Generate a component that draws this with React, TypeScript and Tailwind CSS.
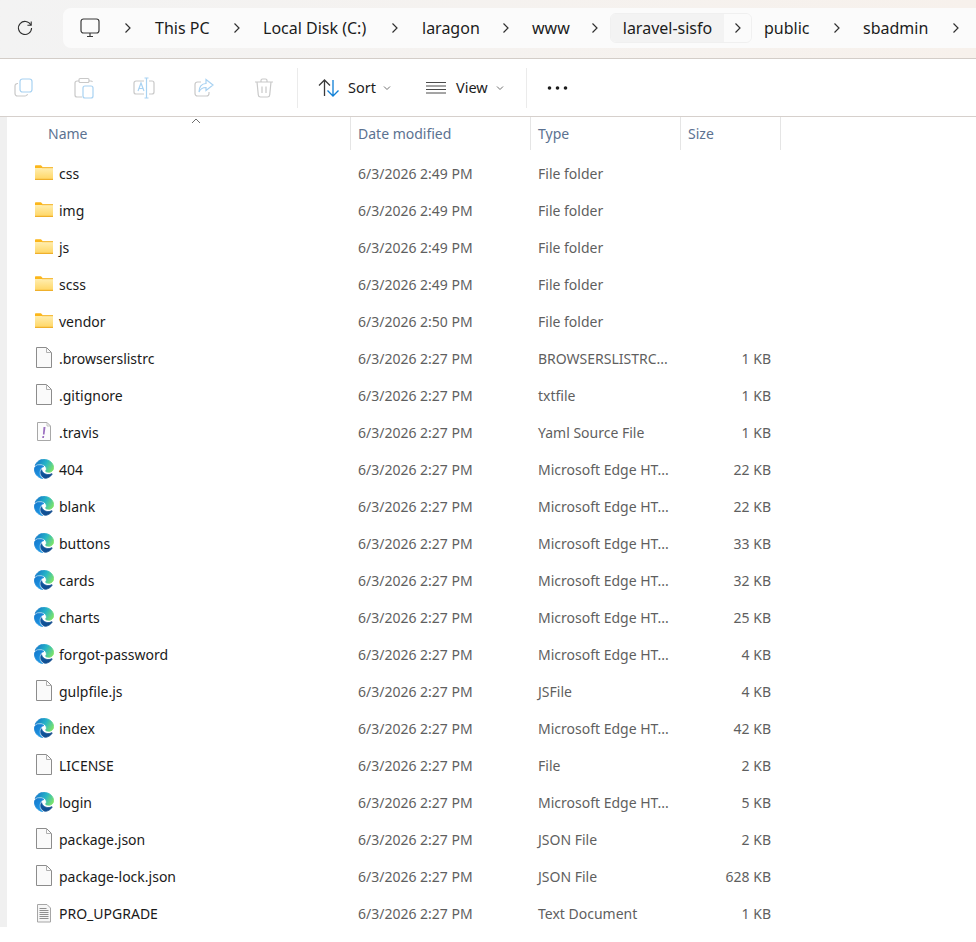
import type { ReactNode } from 'react'

type Kind = 'folder' | 'file' | 'yaml' | 'edge' | 'text'

interface Entry {
  name: string
  date: string
  type: string
  size?: string
  kind: Kind
}

const EDGE = 'Microsoft Edge HT...'

const ENTRIES: Entry[] = [
  { name: 'css', date: '6/3/2026 2:49 PM', type: 'File folder', kind: 'folder' },
  { name: 'img', date: '6/3/2026 2:49 PM', type: 'File folder', kind: 'folder' },
  { name: 'js', date: '6/3/2026 2:49 PM', type: 'File folder', kind: 'folder' },
  { name: 'scss', date: '6/3/2026 2:49 PM', type: 'File folder', kind: 'folder' },
  { name: 'vendor', date: '6/3/2026 2:50 PM', type: 'File folder', kind: 'folder' },
  { name: '.browserslistrc', date: '6/3/2026 2:27 PM', type: 'BROWSERSLISTRC...', size: '1 KB', kind: 'file' },
  { name: '.gitignore', date: '6/3/2026 2:27 PM', type: 'txtfile', size: '1 KB', kind: 'file' },
  { name: '.travis', date: '6/3/2026 2:27 PM', type: 'Yaml Source File', size: '1 KB', kind: 'yaml' },
  { name: '404', date: '6/3/2026 2:27 PM', type: EDGE, size: '22 KB', kind: 'edge' },
  { name: 'blank', date: '6/3/2026 2:27 PM', type: EDGE, size: '22 KB', kind: 'edge' },
  { name: 'buttons', date: '6/3/2026 2:27 PM', type: EDGE, size: '33 KB', kind: 'edge' },
  { name: 'cards', date: '6/3/2026 2:27 PM', type: EDGE, size: '32 KB', kind: 'edge' },
  { name: 'charts', date: '6/3/2026 2:27 PM', type: EDGE, size: '25 KB', kind: 'edge' },
  { name: 'forgot-password', date: '6/3/2026 2:27 PM', type: EDGE, size: '4 KB', kind: 'edge' },
  { name: 'gulpfile.js', date: '6/3/2026 2:27 PM', type: 'JSFile', size: '4 KB', kind: 'file' },
  { name: 'index', date: '6/3/2026 2:27 PM', type: EDGE, size: '42 KB', kind: 'edge' },
  { name: 'LICENSE', date: '6/3/2026 2:27 PM', type: 'File', size: '2 KB', kind: 'file' },
  { name: 'login', date: '6/3/2026 2:27 PM', type: EDGE, size: '5 KB', kind: 'edge' },
  { name: 'package.json', date: '6/3/2026 2:27 PM', type: 'JSON File', size: '2 KB', kind: 'file' },
  { name: 'package-lock.json', date: '6/3/2026 2:27 PM', type: 'JSON File', size: '628 KB', kind: 'file' },
  { name: 'PRO_UPGRADE', date: '6/3/2026 2:27 PM', type: 'Text Document', size: '1 KB', kind: 'text' },
]

function FolderIcon() {
  return (
    <svg width="20" height="15" viewBox="0 0 20 15">
      <defs>
        <linearGradient id="folder-body" x1="0" y1="0" x2="0" y2="1">
          <stop offset="0" stopColor="#ffeeb0" />
          <stop offset="1" stopColor="#ffd767" />
        </linearGradient>
      </defs>
      <path d="M1 1.200C1 .6 1.400 .2 2 .2h5l1.800 2H19v3H1z" fill="#fcb61a" />
      <rect x="1" y="3" width="18" height="11" fill="url(#folder-body)" />
      <rect x="8" y="2.200" width="11" height="1" fill="#f4bb3c" />
      <rect x="1" y="13.800" width="18" height="1.200" fill="#efb02c" />
    </svg>
  )
}

function FileIcon() {
  return (
    <svg width="20" height="21" viewBox="0 0 20 21">
      <path d="M2.500 .5h10l5 5v15h-15z" fill="#fafafa" stroke="#8c8c8c" />
      <path d="M12.500 .5v5h5" fill="none" stroke="#b0b0b0" />
    </svg>
  )
}

function YamlIcon() {
  return (
    <svg width="20" height="21" viewBox="0 0 20 21">
      <path d="M3.500 1.500h9.500l3.500 3.500v14.500h-13z" fill="#fcfcfc" stroke="#a8a8a8" />
      <path d="M13 1.500v3.500h3.500" fill="none" stroke="#c0c0c0" />
      <path d="M9.500 6h2l-1 7.500h-1.600zM8.500 15h1.700l-.3 2h-1.700z" fill="#9b6fc0" />
    </svg>
  )
}

function TextDocIcon() {
  return (
    <svg width="20" height="20" viewBox="0 0 20 20">
      <path d="M3.500 1.500h9.500l3.500 3.500v14h-13z" fill="#f6f6f6" stroke="#a6a6a6" />
      <path d="M5.500 5.500h7M5.500 7.500h9M5.500 9.500h9M5.500 11.500h9M5.500 13.500h9M5.500 15.500h9" stroke="#8f8f8f" />
    </svg>
  )
}

function EdgeIcon() {
  return (
    <svg width="20" height="20" viewBox="-0.5 -0.5 25 25">
      <defs>
        <linearGradient id="edge-top" x1="0" y1="0.3" x2="1" y2="0.7">
          <stop offset="0" stopColor="#1478cc" />
          <stop offset="0.5" stopColor="#26b4c6" />
          <stop offset="1" stopColor="#7ce36a" />
        </linearGradient>
        <linearGradient id="edge-left" x1="0" y1="0" x2="0.7" y2="1">
          <stop offset="0" stopColor="#1478cc" />
          <stop offset="1" stopColor="#1f9ae6" />
        </linearGradient>
        <linearGradient id="edge-bottom" x1="0" y1="0" x2="1" y2="0.6">
          <stop offset="0" stopColor="#0c59a4" />
          <stop offset="1" stopColor="#114a8b" />
        </linearGradient>
      </defs>
      <path fill="url(#edge-left)" stroke="url(#edge-left)" strokeWidth="1.100" d="M6.360 16.590q0 1.100.27 2.150.27 1.060.78 2.030.51.96 1.240 1.770.74.82 1.660 1.400-1.470-.2-2.800-.74-1.330-.55-2.480-1.370-1.150-.83-2.080-1.900-.92-1.070-1.580-2.330T.36 14.940Q0 13.540 0 12.060q0-.81.32-1.490.31-.68.83-1.230.53-.55 1.200-.96.66-.4 1.350-.66.74-.27 1.500-.39.78-.12 1.550-.12.7 0 1.420.1.72.12 1.400.35.68.23 1.320.57.63.35 1.160.83-.35 0-.7.07-.33.07-.65.23v-.02q-.63.28-1.200.74-.57.46-1.050 1.040-.48.58-.87 1.260-.38.67-.65 1.390-.27.71-.42 1.440-.15.72-.15 1.380z" />
      <path fill="url(#edge-bottom)" stroke="url(#edge-bottom)" strokeWidth="1.100" d="M21.860 17.860q.14 0 .25.12.1.13.1.25t-.11.33l-.32.46-.43.53-.44.5q-.21.25-.38.42l-.22.23q-.58.53-1.340 1.040-.76.51-1.600.91-.86.4-1.740.64t-1.670.24q-.9 0-1.690-.28-.8-.28-1.480-.78-.68-.5-1.220-1.170-.53-.66-.92-1.440-.38-.77-.58-1.600-.2-.83-.2-1.670 0-1 .32-1.960.33-.97.87-1.800.14.95.55 1.770.41.82 1.020 1.500.6.68 1.380 1.210.78.54 1.640.9.86.36 1.770.56.92.2 1.800.2 1.120 0 2.180-.24 1.060-.23 2.060-.72l.2-.1.2-.05z" />
      <path fill="url(#edge-top)" stroke="url(#edge-top)" strokeWidth="1.100" d="M11.960.06q1.700 0 3.330.39 1.630.38 3.070 1.150 1.430.77 2.620 1.930 1.180 1.160 1.980 2.700.49.94.76 1.960.28 1 .28 2.080 0 .89-.23 1.700-.24.8-.69 1.480-.45.68-1.100 1.220-.64.53-1.450.88-.54.24-1.110.36-.58.13-1.160.13-.42 0-.97-.03-.54-.03-1.100-.12-.55-.1-1.050-.28-.5-.19-.84-.5-.12-.09-.23-.24-.1-.16-.1-.33 0-.15.16-.35.16-.2.35-.5.2-.28.36-.68.16-.4.16-.95 0-1.060-.4-1.960-.4-.91-1.060-1.640-.66-.74-1.520-1.280-.86-.55-1.790-.89-.84-.3-1.720-.44-.87-.14-1.760-.14-1.550 0-3.060.45T.94 7.550q.71-1.740 1.810-3.130Q3.850 3.030 5.200 2.030 6.550 1.030 8.150.55 9.760.06 11.960.06z" />
    </svg>
  )
}

function EntryIcon({ kind }: { kind: Kind }) {
  if (kind === 'folder') return <FolderIcon />
  if (kind === 'yaml') return <YamlIcon />
  if (kind === 'edge') return <EdgeIcon />
  if (kind === 'text') return <TextDocIcon />
  return <FileIcon />
}

function Chevron() {
  return (
    <svg width="10" height="14" viewBox="0 0 10 14" className="shrink-0">
      <path d="M2.500 2.500 7 7l-4.500 4.500" fill="none" stroke="#303030" strokeWidth="1.200" />
    </svg>
  )
}

function Crumb({ children, className }: { children: ReactNode; className: string }) {
  return <span className={`shrink-0 text-[16px] text-[#1c1c1c] ${className}`}>{children}</span>
}

function AddressBar() {
  return (
    <div className="flex h-[59px] items-center border-b border-[#d3cdc8] bg-gradient-to-r from-[#f3f3f3] to-[#f7f1ec] pb-[2px]">
      <div className="flex w-[63px] shrink-0 pl-[16px]">
        <svg width="18" height="18" viewBox="0 0 20 20" fill="none" stroke="#2f2f2f" strokeWidth="1.200">
          <path d="M16.500 6.600A7.300 7.300 0 1 0 17.300 10" />
          <path d="M16.900 2.800v4.200h-4.200" />
        </svg>
      </div>
      <div className="flex h-10 flex-1 items-center overflow-hidden rounded-l-lg bg-[#fbfbfb] pl-[17px]">
        <svg width="20" height="20" viewBox="0 0 20 20" fill="none" stroke="#3a3a3a" strokeWidth="1.200" className="shrink-0">
          <rect x="1" y="1" width="18" height="14" rx="2.500" />
          <path d="M7 18.500h6M10 15v3" />
        </svg>
        <span className="ml-[23px]"><Chevron /></span>
        <Crumb className="ml-[22px] w-[77px]">This PC</Crumb>
        <Chevron />
        <Crumb className="ml-[21px] w-[127px]">Local Disk (C:)</Crumb>
        <Chevron />
        <Crumb className="ml-[22px] w-[79px]">laragon</Crumb>
        <Chevron />
        <Crumb className="ml-[21px] w-[58px]">www</Crumb>
        <Chevron />
        <div className="ml-[10px] flex h-[30px] w-[142px] shrink-0 overflow-hidden rounded-md border border-[#f0f0f0]">
          <span className="flex w-[113px] items-center justify-center bg-[#f3f3f3] text-[16px] text-[#1c1c1c]">laravel-sisfo</span>
          <span className="flex flex-1 items-center justify-center bg-[#fbfbfb]"><Chevron /></span>
        </div>
        <Crumb className="ml-[12px] w-[68px]">public</Crumb>
        <Chevron />
        <Crumb className="ml-[21px] w-[88px]">sbadmin</Crumb>
        <Chevron />
      </div>
    </div>
  )
}

function Toolbar() {
  return (
    <div className="flex h-[58px] items-center border-b border-[#d6d0cc] bg-white pt-[1px]">
      <div className="ml-[14px] flex w-[283px] shrink-0 items-center">
        <svg width="20" height="20" viewBox="0 0 20 20" fill="none" strokeWidth="1.200">
          <path d="M4 5.500h-.500A2.500 2.500 0 0 0 1 8v7.500A2.500 2.500 0 0 0 3.500 18H11a2.500 2.500 0 0 0 2.500-2" stroke="#c9c9c9" />
          <rect x="6" y="1" width="12" height="13" rx="2.500" stroke="#a8d2f2" />
        </svg>
        <svg width="20" height="22" viewBox="0 0 20 22" fill="none" strokeWidth="1.200" className="ml-[40px]">
          <path d="M5 4H3a2 2 0 0 0-2 2v12a2 2 0 0 0 2 2h5M15 4h2a2 2 0 0 1 1.500.8" stroke="#c9c9c9" />
          <rect x="5" y="1.500" width="10" height="4" rx="1.200" stroke="#c9c9c9" />
          <rect x="9" y="9" width="10" height="12" rx="2" stroke="#a8d2f2" />
        </svg>
        <svg width="22" height="22" viewBox="0 0 22 22" fill="none" strokeWidth="1.200" className="ml-[39px]">
          <path d="M11 4H3a2 2 0 0 0-2 2v9a2 2 0 0 0 2 2h8M16 4h3a2 2 0 0 1 2 2v9a2 2 0 0 1-2 2h-3" stroke="#c9c9c9" />
          <path d="M13.500 1v20M11.500 1h4M11.500 21h4M5 14l3-8 3 8M6 11.500h4" stroke="#a8d2f2" />
        </svg>
        <svg width="20" height="20" viewBox="0 0 20 20" fill="none" strokeWidth="1.200" className="ml-[39px]">
          <path d="M7 4H3.500A2.500 2.500 0 0 0 1 6.500v9A2.500 2.500 0 0 0 3.500 18h9a2.500 2.500 0 0 0 2.500-2.500V14" stroke="#c9c9c9" />
          <path d="M12 1.500 19 7l-7 5.500V9.500C9 9.500 6.500 10.500 5 14c0-5 2.500-8.500 7-8.500z" stroke="#a8d2f2" />
        </svg>
        <svg width="20" height="20" viewBox="0 0 20 20" fill="none" stroke="#c9c9c9" strokeWidth="1.200" className="ml-[40px]">
          <path d="M1 4h18M7 4V2.500C7 1.700 7.700 1 8.500 1h3c.8 0 1.500.7 1.500 1.500V4M3 4l1.300 13c.1 1.200 1 2 2.200 2h7c1.200 0 2.100-.8 2.200-2L17 4M8 8.500v6.500M12 8.500v6.500" />
        </svg>
      </div>
      <div className="h-10 w-px shrink-0 bg-[#ebebeb]" />
      <div className="ml-[20px] flex items-center">
        <svg width="22" height="20" viewBox="0 0 22 20" fill="none" strokeWidth="1.300">
          <path d="M6.500 18V2M1 7.500l5.500-5.500L12 7.500" stroke="#3a3a3a" />
          <path d="M15 2v16M9.500 12.500 15 18l5.500-5.500" stroke="#0f7fd6" />
        </svg>
        <span className="ml-[8px] text-[14.500px] text-[#1c1c1c]">Sort</span>
        <svg width="8" height="6" viewBox="0 0 8 6" className="ml-[7px]">
          <path d="M1 1.500 4 4.500 7 1.500" fill="none" stroke="#707070" />
        </svg>
      </div>
      <div className="ml-[35px] flex items-center">
        <svg width="20" height="14" viewBox="0 0 20 14" stroke="#4a4a4a" strokeWidth="1">
          <path d="M0 1.500h20M0 5h20M0 8.500h20M0 12h20" />
        </svg>
        <span className="ml-[10px] text-[14.500px] text-[#1c1c1c]">View</span>
        <svg width="8" height="6" viewBox="0 0 8 6" className="ml-[8px]">
          <path d="M1 1.500 4 4.500 7 1.500" fill="none" stroke="#707070" />
        </svg>
      </div>
      <div className="ml-[22px] h-10 w-px bg-[#ebebeb]" />
      <svg width="22" height="6" viewBox="0 0 22 6" fill="#1c1c1c" className="ml-[20px]">
        <circle cx="2.500" cy="3" r="1.800" /><circle cx="10.500" cy="3" r="1.800" /><circle cx="18.500" cy="3" r="1.800" />
      </svg>
    </div>
  )
}

function ColumnHeader() {
  const cell = 'flex h-[33px] items-center border-r border-[#e5e5e5] pl-[7px] text-[14px] text-[#5c7291]'
  return (
    <div className="relative flex">
      <svg width="10" height="6" viewBox="0 0 10 6" className="absolute left-[184px] top-[1px]">
        <path d="M1 5l4-4 4 4" fill="none" stroke="#6e6e6e" />
      </svg>
      <div className={`${cell} w-[344px] pl-[41px]`}>Name</div>
      <div className={`${cell} w-[180px]`}>Date modified</div>
      <div className={`${cell} w-[150px]`}>Type</div>
      <div className={`${cell} w-[100px]`}>Size</div>
    </div>
  )
}

function Row({ entry }: { entry: Entry }) {
  return (
    <div className="flex h-[37px] items-center text-[14px] leading-none">
      <div className="flex w-[344px] items-center">
        <div className="ml-[26px] flex w-[22px] justify-center pb-[2px]"><EntryIcon kind={entry.kind} /></div>
        <span className="ml-[4px] text-[#1a1a1a]">{entry.name}</span>
      </div>
      <span className="w-[180px] pl-[7px] text-[#5f5f5f]">{entry.date}</span>
      <span className="w-[150px] whitespace-nowrap pl-[7px] text-[#5f5f5f]">{entry.type}</span>
      <span className="w-[90px] text-right text-[#5f5f5f]">{entry.size}</span>
    </div>
  )
}

export default function App() {
  return (
    <div className="h-[942px] w-[976px] overflow-hidden bg-white font-['Noto_Sans',sans-serif]">
      <AddressBar />
      <Toolbar />
      <div className="h-[810px] border-l-[7px] border-[#f0f0f0] bg-white">
        <ColumnHeader />
        <div className="h-[777px] overflow-hidden pt-[5px]">
          {ENTRIES.map((entry) => (
            <Row key={entry.name} entry={entry} />
          ))}
        </div>
      </div>
    </div>
  )
}
